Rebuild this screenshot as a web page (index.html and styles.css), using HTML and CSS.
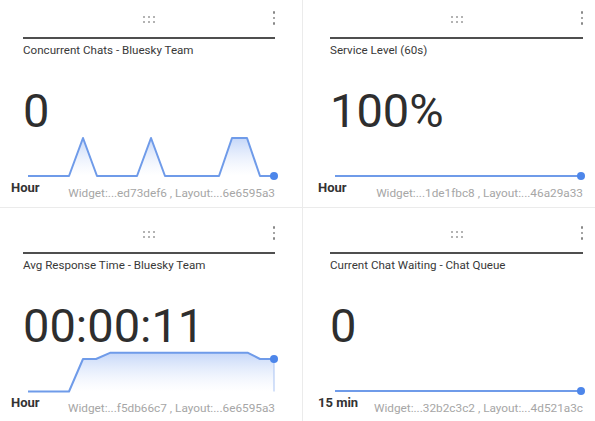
FILE: index.html
```html
<!DOCTYPE html>
<html>
<head>
<meta charset="utf-8">
<link rel="stylesheet" href="styles.css">
</head>
<body>
<div class="board">
  <section class="card card-tl">
    <div class="card-head">
      <span class="drag"><i></i><i></i><i></i><i></i><i></i><i></i></span>
      <span class="kebab"><i></i><i></i><i></i></span>
    </div>
    <div class="rule"></div>
    <div class="title">Concurrent Chats - Bluesky Team</div>
    <div class="value">0</div>
    <svg class="chart" width="253" height="45" viewBox="0 0 253 45">
      <defs>
        <linearGradient id="g1" x1="0" y1="0" x2="0" y2="1">
          <stop offset="0" stop-color="#7fa6f0" stop-opacity="0.45"/>
          <stop offset="1" stop-color="#ffffff" stop-opacity="0.2"/>
        </linearGradient>
      </defs>
      <polygon points="5,40 46,40 60,2 74,40 114,40 128,2 142,40 196,40 209,2 224,2 237,40 251,40" fill="url(#g1)"/>
      <polyline points="5,40 46,40 60,2 74,40 114,40 128,2 142,40 196,40 209,2 224,2 237,40 251,40" fill="none" stroke="#6f9be9" stroke-width="2" stroke-linejoin="round"/>
      <circle cx="251" cy="40" r="4" fill="#4d86ea"/>
    </svg>
    <div class="card-foot">
      <span class="range">Hour</span>
      <span class="ids">Widget:...ed73def6 , Layout:...6e6595a3</span>
    </div>
  </section>

  <section class="card card-tr">
    <div class="card-head">
      <span class="drag"><i></i><i></i><i></i><i></i><i></i><i></i></span>
      <span class="kebab"><i></i><i></i><i></i></span>
    </div>
    <div class="rule"></div>
    <div class="title">Service Level (60s)</div>
    <div class="value">100%</div>
    <svg class="chart" width="253" height="45" viewBox="0 0 253 45">
      <polyline points="5,40 251,40" fill="none" stroke="#6f9be9" stroke-width="2"/>
      <circle cx="251" cy="40" r="4" fill="#4d86ea"/>
    </svg>
    <div class="card-foot">
      <span class="range">Hour</span>
      <span class="ids">Widget:...1de1fbc8 , Layout:...46a29a33</span>
    </div>
  </section>

  <section class="card card-bl">
    <div class="card-head">
      <span class="drag"><i></i><i></i><i></i><i></i><i></i><i></i></span>
      <span class="kebab"><i></i><i></i><i></i></span>
    </div>
    <div class="rule"></div>
    <div class="title">Avg Response Time - Bluesky Team</div>
    <div class="value">00:00:11</div>
    <svg class="chart" width="253" height="45" viewBox="0 0 253 45">
      <defs>
        <linearGradient id="g2" x1="0" y1="0" x2="0" y2="1">
          <stop offset="0" stop-color="#7fa6f0" stop-opacity="0.45"/>
          <stop offset="1" stop-color="#ffffff" stop-opacity="0.2"/>
        </linearGradient>
      </defs>
      <polygon points="5,40.5 46,40.5 60,8 73,8 87,1.8 225,1.8 237,8 251,8 251,40.5" fill="url(#g2)"/>
      <line x1="251" y1="8" x2="251" y2="40.5" stroke="#a9c3f3" stroke-width="1"/>
      <polyline points="5,40.5 46,40.5 60,8 73,8 87,1.8 225,1.8 237,8 251,8" fill="none" stroke="#6f9be9" stroke-width="2" stroke-linejoin="round"/>
      <circle cx="251" cy="8" r="4" fill="#4d86ea"/>
    </svg>
    <div class="card-foot">
      <span class="range">Hour</span>
      <span class="ids">Widget:...f5db66c7 , Layout:...6e6595a3</span>
    </div>
  </section>

  <section class="card card-br">
    <div class="card-head">
      <span class="drag"><i></i><i></i><i></i><i></i><i></i><i></i></span>
      <span class="kebab"><i></i><i></i><i></i></span>
    </div>
    <div class="rule"></div>
    <div class="title">Current Chat Waiting - Chat Queue</div>
    <div class="value">0</div>
    <svg class="chart" width="253" height="45" viewBox="0 0 253 45">
      <polyline points="5,40 251,40" fill="none" stroke="#6f9be9" stroke-width="2"/>
      <circle cx="251" cy="40" r="4" fill="#4d86ea"/>
    </svg>
    <div class="card-foot">
      <span class="range">15 min</span>
      <span class="ids">Widget:...32b2c3c2 , Layout:...4d521a3c</span>
    </div>
  </section>
</div>
</body>
</html>
```

FILE: styles.css
```css
html, body {
  margin: 0;
  padding: 0;
  background: #ffffff;
  overflow: hidden;
}

body {
  width: 595px;
  height: 421px;
  font-family: Roboto, "Liberation Sans", sans-serif;
  color: #333333;
}

.board {
  display: grid;
  grid-template-columns: 307px 307px;
  grid-auto-rows: 215px;
  margin: -7px 0 0 -4px;
}

.card {
  padding: 0 27px;
  box-sizing: border-box;
  background: #ffffff;
  display: flex;
  flex-direction: column;
}

.card-tl, .card-bl {
  border-right: 1px solid #ebebeb;
}

.card-tl, .card-tr {
  border-bottom: 1px solid #ebebeb;
}

.card-head {
  height: 44px;
  display: grid;
  grid-template-columns: 1fr auto 1fr;
  align-items: start;
}

.drag {
  grid-column: 2;
  margin-top: 23px;
  display: grid;
  grid-template-columns: repeat(3, 2px);
  grid-auto-rows: 2px;
  gap: 3px;
}

.drag i, .kebab i {
  display: block;
  background: #9a9a9a;
  border-radius: 50%;
}

.drag i {
  width: 2px;
  height: 2px;
}

.kebab {
  grid-column: 3;
  justify-self: end;
  margin-top: 18px;
  display: flex;
  flex-direction: column;
  gap: 3px;
}

.kebab i {
  width: 2.5px;
  height: 2.5px;
  background: #888888;
}

.rule {
  height: 2px;
  background: #4f4f4f;
}

.title {
  margin-top: 5px;
  font-size: 11.6px;
  line-height: 13px;
  font-weight: 400;
  color: #383838;
  white-space: nowrap;
}

.value {
  margin-top: 29px;
  font-size: 47px;
  line-height: 50px;
  font-weight: 400;
  color: #2e2e2e;
  white-space: nowrap;
}

.chart {
  display: block;
  overflow: visible;
}

.card-foot {
  margin-left: -12px;
  display: flex;
  justify-content: space-between;
  align-items: flex-start;
}

.range {
  font-size: 13px;
  line-height: 14px;
  font-weight: 700;
  color: #333333;
}

.ids {
  padding-top: 5px;
  font-size: 11.8px;
  line-height: 14px;
  color: #a6a6a6;
  white-space: nowrap;
}
```
